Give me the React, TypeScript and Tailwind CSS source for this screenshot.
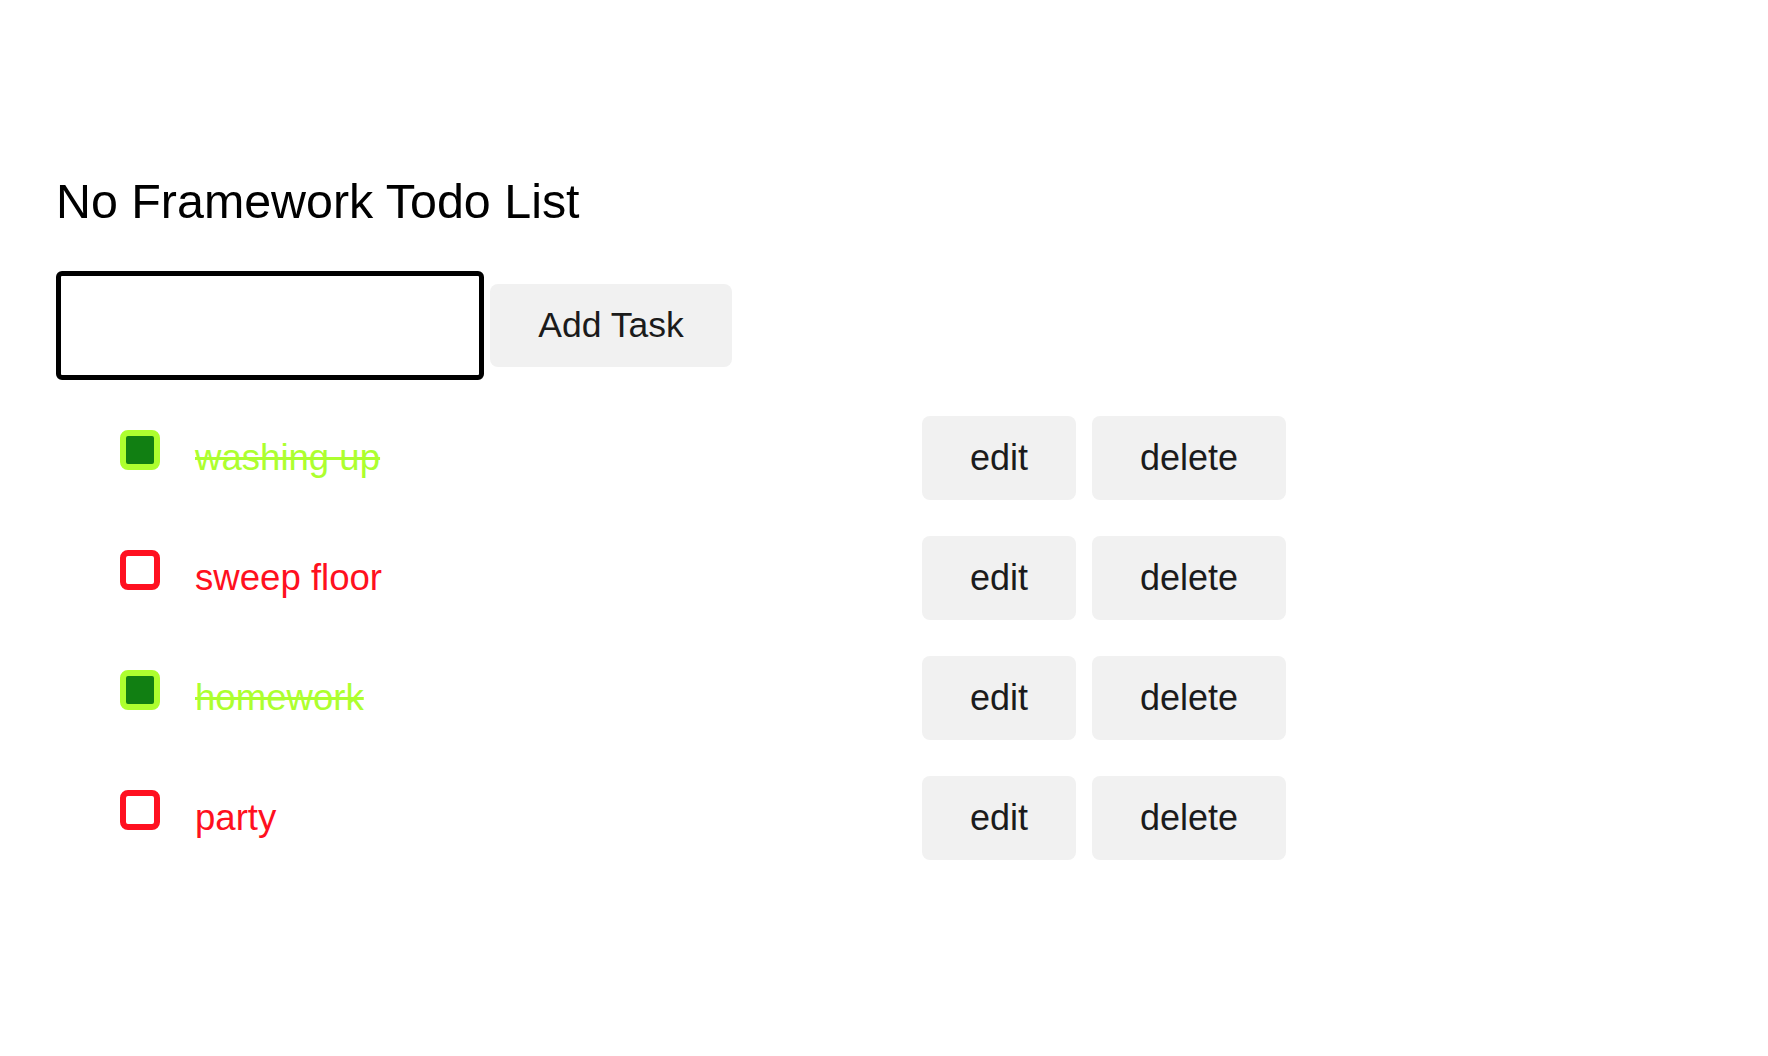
import { useState } from "react";

interface Todo {
  id: number;
  text: string;
  done: boolean;
}

const initialTodos: Todo[] = [
  { id: 1, text: "washing up", done: true },
  { id: 2, text: "sweep floor", done: false },
  { id: 3, text: "homework", done: true },
  { id: 4, text: "party", done: false },
];

export default function App() {
  const [todos, setTodos] = useState<Todo[]>(initialTodos);
  const [draft, setDraft] = useState("");

  function addTask() {
    if (!draft.trim()) return;
    setTodos([...todos, { id: Date.now(), text: draft.trim(), done: false }]);
    setDraft("");
  }

  function toggle(id: number) {
    setTodos(todos.map((t) => (t.id === id ? { ...t, done: !t.done } : t)));
  }

  function remove(id: number) {
    setTodos(todos.filter((t) => t.id !== id));
  }

  return (
    <div
      className="min-h-screen bg-white px-[56px] pt-[174px] text-black"
      style={{ fontFamily: '"Liberation Sans", Arial, Helvetica, sans-serif' }}
    >
      <h1 className="m-0 text-[48.4px] font-normal leading-[55px]">
        No Framework Todo List
      </h1>

      <div className="mt-[42px] flex items-center gap-[6px]">
        <input
          value={draft}
          onChange={(e) => setDraft(e.target.value)}
          className="h-[109px] w-[428px] rounded-[6px] border-[5px] border-black px-3 text-[36px] outline-none"
        />
        <button
          onClick={addTask}
          className="h-[83px] w-[242px] rounded-[8px] bg-[#f1f1f1] text-[35.5px] text-[#1b1b1b]"
        >
          Add Task
        </button>
      </div>

      <ul className="mt-[36px] flex flex-col gap-[36px]">
        {todos.map((todo) => (
          <li key={todo.id} className="flex h-[84px] items-center">
            <div className="flex w-[866px] items-center pl-[64px]">
              <button
                onClick={() => toggle(todo.id)}
                className={
                  todo.done
                    ? "mb-[16px] h-[40px] w-[40px] shrink-0 rounded-[8px] border-[6px] border-[#adff2f] bg-[#117f12]"
                    : "mb-[16px] h-[40px] w-[40px] shrink-0 rounded-[8px] border-[6px] border-[#ff1020] bg-white"
                }
              />
              <span
                className={
                  todo.done
                    ? "ml-[35px] text-[36.6px] text-[#adff2f] line-through"
                    : "ml-[35px] text-[36.6px] text-[#ff1020]"
                }
              >
                {todo.text}
              </span>
            </div>
            <div className="flex gap-[16px]">
              <button className="h-[84px] w-[154px] rounded-[8px] bg-[#f1f1f1] text-[36px] text-[#1b1b1b]">
                edit
              </button>
              <button
                onClick={() => remove(todo.id)}
                className="h-[84px] w-[194px] rounded-[8px] bg-[#f1f1f1] text-[36px] text-[#1b1b1b]"
              >
                delete
              </button>
            </div>
          </li>
        ))}
      </ul>
    </div>
  );
}
